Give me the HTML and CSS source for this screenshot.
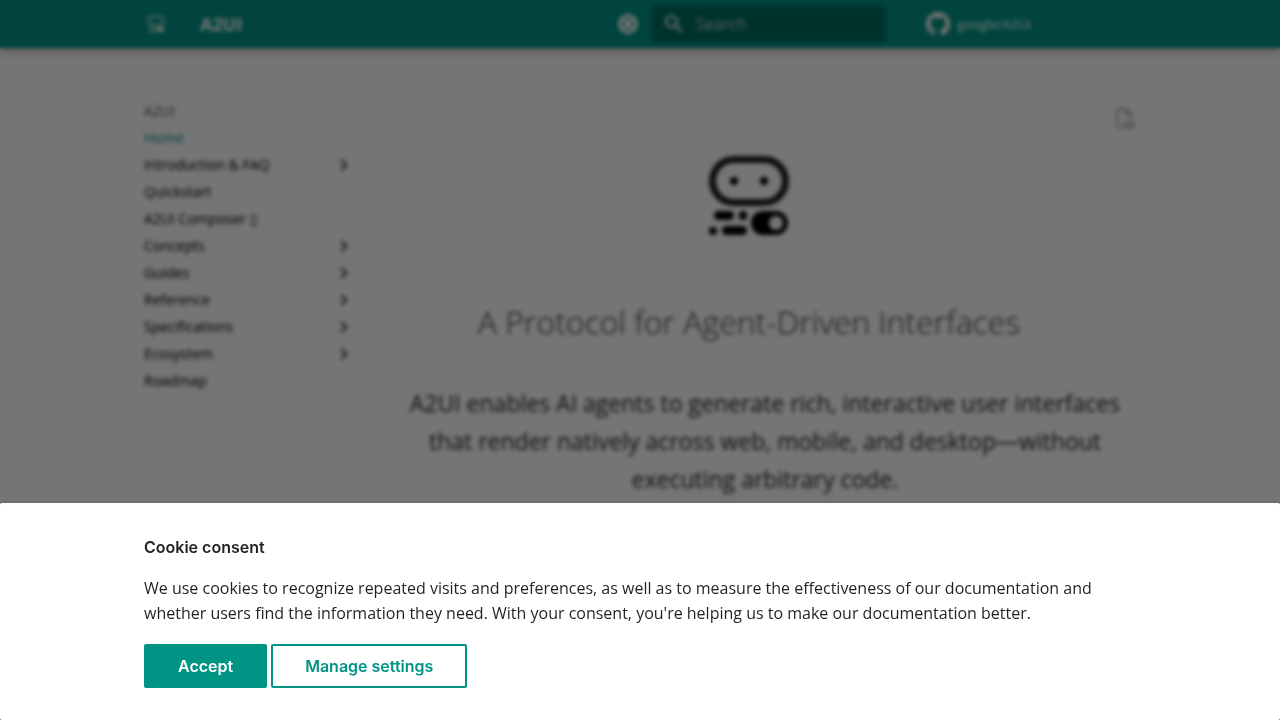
FILE: index.html
```
<!DOCTYPE html>
<html lang="en">
<head>
    <meta charset="UTF-8">
    <meta name="viewport" content="width=device-width, initial-scale=1.0">
    <title>A2UI</title>
    <link rel="stylesheet" href="styles.css">
</head>
<body>

<header class="header">
    <div class="header-inner">
        <a class="logo" href="#" aria-label="A2UI">
            <svg viewBox="0 0 24 24" width="24" height="24" fill="none" stroke="currentColor" stroke-width="1.500">
                <rect x="4.500" y="4" width="15" height="9.500" rx="4.750"/>
                <path d="M6 16.500h3M11.500 16.500h.5M5 19.500h.5M8 19.500h4" stroke-linecap="round"/>
                <rect x="13" y="15" width="7" height="5" rx="2.500" fill="currentColor" stroke="none"/>
            </svg>
        </a>
        <span class="site-name">A2UI</span>
        <button class="icon-button" type="button" aria-label="Switch to dark mode">
            <svg viewBox="0 0 24 24" width="24" height="24" fill="currentColor"><path d="M12 8a4 4 0 0 0-4 4 4 4 0 0 0 4 4 4 4 0 0 0 4-4 4 4 0 0 0-4-4m0 10a6 6 0 0 1-6-6 6 6 0 0 1 6-6 6 6 0 0 1 6 6 6 6 0 0 1-6 6m8-9.310V4h-4.690L12 .690 8.690 4H4v4.690L.690 12 4 15.310V20h4.690L12 23.310 15.310 20H20v-4.690L23.310 12z"/></svg>
        </button>
        <label class="search">
            <svg viewBox="0 0 24 24" width="24" height="24" fill="currentColor"><path d="M9.500 3A6.500 6.500 0 0 1 16 9.500c0 1.610-.590 3.090-1.560 4.230l.270.270h.790l5 5-1.500 1.500-5-5v-.790l-.270-.270A6.516 6.516 0 0 1 9.500 16 6.500 6.500 0 0 1 3 9.500 6.500 6.500 0 0 1 9.500 3m0 2C7 5 5 7 5 9.500S7 14 9.500 14 14 12 14 9.500 12 5 9.500 5"/></svg>
            <input type="text" placeholder="Search" aria-label="Search">
        </label>
        <a class="source" href="#">
            <svg viewBox="0 0 16 16" width="24" height="24" fill="currentColor"><path d="M8 0C3.580 0 0 3.580 0 8c0 3.540 2.290 6.530 5.470 7.590.4.070.550-.170.550-.380 0-.190-.010-.820-.010-1.490-2.010.370-2.530-.490-2.690-.940-.090-.230-.480-.940-.820-1.130-.280-.150-.680-.520-.010-.530.630-.010 1.080.580 1.230.820.720 1.210 1.870.870 2.330.660.070-.520.280-.870.510-1.070-1.780-.2-3.640-.890-3.640-3.950 0-.870.310-1.590.820-2.150-.080-.2-.360-1.020.080-2.120 0 0 .670-.210 2.200.820a7.600 7.600 0 0 1 4 0c1.530-1.040 2.200-.820 2.200-.820.440 1.100.160 1.920.080 2.120.510.560.820 1.270.820 2.150 0 3.070-1.870 3.750-3.650 3.950.290.250.540.730.540 1.480 0 1.070-.010 1.930-.010 2.200 0 .210.150.460.550.380A8.010 8.010 0 0 0 16 8c0-4.420-3.580-8-8-8"/></svg>
            <span>google/A2UI</span>
        </a>
    </div>
</header>

<div class="container">
    <nav class="sidebar" aria-label="Navigation">
        <span class="nav-title">A2UI</span>
        <a class="nav-link active" href="#">Home</a>
        <a class="nav-link section" href="#">Introduction &amp; FAQ</a>
        <a class="nav-link" href="#">Quickstart</a>
        <a class="nav-link" href="#">A2UI Composer ▯</a>
        <a class="nav-link section" href="#">Concepts</a>
        <a class="nav-link section" href="#">Guides</a>
        <a class="nav-link section" href="#">Reference</a>
        <a class="nav-link section" href="#">Specifications</a>
        <a class="nav-link section" href="#">Ecosystem</a>
        <a class="nav-link" href="#">Roadmap</a>
    </nav>

    <main class="content">
        <div class="hero">
            <div class="hero-main">
                <svg class="hero-logo" viewBox="0 0 80 80" width="80" height="80">
                    <rect x="3.500" y="3.500" width="73" height="43" rx="21.500" fill="none" stroke="currentColor" stroke-width="7"/>
                    <circle cx="25" cy="25" r="4"/>
                    <circle cx="55" cy="25" r="4"/>
                    <rect x="5" y="55" width="20" height="9" rx="4.500"/>
                    <rect x="30" y="55" width="8" height="9" rx="4"/>
                    <circle cx="4" cy="75" r="4"/>
                    <rect x="13" y="70" width="25" height="9" rx="4.500"/>
                    <path fill-rule="evenodd" d="M54 55h13a12 12 0 0 1 0 24H54a12 12 0 0 1 0-24m13 5a7 7 0 1 0 0 14 7 7 0 0 0 0-14"/>
                </svg>
                <h1>A Protocol for Agent-Driven Interfaces</h1>
            </div>
            <a class="view-source" href="#" aria-label="View source of this page">
                <svg viewBox="0 0 24 24" width="24" height="24" fill="currentColor"><path d="M17 18c.560 0 1 .440 1 1s-.440 1-1 1-1-.440-1-1 .440-1 1-1m0-3c-2.730 0-5.060 1.660-6 4 .940 2.340 3.270 4 6 4s5.060-1.660 6-4c-.940-2.340-3.270-4-6-4m0 6.500a2.500 2.500 0 0 1-2.500-2.500 2.500 2.500 0 0 1 2.500-2.500 2.500 2.500 0 0 1 2.500 2.500 2.500 2.500 0 0 1-2.500 2.500M9.270 20H6V4h7v5h5v4.070c.7.080 1.360.250 2 .490V8l-6-6H6a2 2 0 0 0-2 2v16a2 2 0 0 0 2 2h4.500a8.200 8.200 0 0 1-1.230-2"/></svg>
            </a>
        </div>
        <p class="tagline">A2UI enables AI agents to generate rich, interactive user interfaces that render natively across web, mobile, and desktop—without executing arbitrary code.</p>
    </main>
</div>

<!-- Cookie consent dialog -->
<div class="overlay"></div>
<aside class="consent" role="dialog" aria-labelledby="consentTitle">
    <form class="consent-inner">
        <h4 id="consentTitle">Cookie consent</h4>
        <p>We use cookies to recognize repeated visits and preferences, as well as to measure the effectiveness of our documentation and whether users find the information they need. With your consent, you're helping us to make our documentation better.</p>
        <div class="consent-actions">
            <button class="button primary" type="button">Accept</button>
            <button class="button" type="button">Manage settings</button>
        </div>
    </form>
</aside>

</body>
</html>
```

FILE: styles.css
```
* {
    box-sizing: border-box;
}

body {
    font-family: 'Open Sans', sans-serif;
    font-size: 16px;
    color: rgba(0, 0, 0, 0.87);
    background-color: #fff;
    margin: 0;
    overflow: hidden;
}

a {
    color: inherit;
    text-decoration: none;
}

svg {
    display: block;
    flex-shrink: 0;
}

.header {
    background-color: #009485;
    color: #fff;
    box-shadow: 0 0 4px rgba(0, 0, 0, 0.1), 0 4px 8px rgba(0, 0, 0, 0.2);
}

.header-inner {
    display: flex;
    align-items: center;
    height: 48px;
    max-width: 992px;
    margin: 0 auto;
}

.site-name {
    flex: 1;
    margin-left: 32px;
    font-size: 18px;
    font-weight: 700;
}

.icon-button {
    margin: 0 12px;
    padding: 0;
    border: none;
    background: none;
    color: inherit;
    cursor: pointer;
}

.search {
    display: flex;
    align-items: center;
    gap: 10px;
    width: 234px;
    height: 36px;
    padding: 0 10px;
    border-radius: 2px;
    background-color: rgba(0, 0, 0, 0.26);
}

.search input {
    width: 100%;
    min-width: 0;
    padding: 0;
    border: none;
    outline: none;
    background: none;
    color: inherit;
    font-family: inherit;
    font-size: 16px;
}

.search input::placeholder {
    color: rgba(255, 255, 255, 0.7);
}

.source {
    display: flex;
    align-items: center;
    gap: 7px;
    width: 210px;
    margin-left: 40px;
    font-size: 13px;
}

.container {
    display: flex;
    gap: 38px;
    max-width: 992px;
    margin: 0 auto;
    padding-top: 49px;
}

.sidebar {
    display: flex;
    flex-direction: column;
    width: 212px;
    font-size: 14px;
    line-height: 27px;
}

.nav-title {
    color: rgba(0, 0, 0, 0.7);
    font-weight: 500;
}

.nav-link {
    display: flex;
    align-items: center;
    justify-content: space-between;
    color: #000;
}

.nav-link.active {
    color: #009485;
}

.nav-link.section::after {
    content: "";
    width: 6px;
    height: 6px;
    margin-right: 10px;
    border-top: 2px solid rgba(0, 0, 0, 0.8);
    border-right: 2px solid rgba(0, 0, 0, 0.8);
    transform: rotate(45deg);
}

.content {
    flex: 1;
}

.hero {
    display: flex;
    gap: 8px;
    padding-top: 9px;
}

.hero-main {
    flex: 1;
    padding-top: 50px;
}

.hero-logo {
    margin: 0 auto;
}

h1 {
    margin: 65px 0 41px;
    font-size: 32px;
    font-weight: 300;
    line-height: 42px;
    text-align: center;
    color: rgba(0, 0, 0, 0.8);
}

.view-source {
    color: rgba(0, 0, 0, 0.32);
}

.tagline {
    margin: 0;
    font-size: 23px;
    line-height: 38px;
    text-align: center;
}

.overlay {
    position: fixed;
    inset: 0;
    background-color: rgba(0, 0, 0, 0.54);
    backdrop-filter: blur(2px);
}

.consent {
    position: fixed;
    right: 0;
    bottom: 0;
    left: 0;
    padding: 32px 24px;
    border-radius: 2px;
    background-color: #fff;
    box-shadow: 0 0 4px rgba(0, 0, 0, 0.1), 0 4px 8px rgba(0, 0, 0, 0.2);
    line-height: 25px;
}

.consent-inner {
    max-width: 992px;
    margin: 0 auto;
}

.consent h4 {
    margin: 0 0 16px;
    font-family: 'Inter', sans-serif;
    font-size: 16px;
    font-weight: 600;
}

.consent p {
    margin: 0 0 18px;
}

.consent-actions {
    display: flex;
    gap: 4px;
}

.button {
    padding: 10px 32px;
    border: 2px solid #009485;
    border-radius: 2px;
    background-color: #fff;
    color: #009485;
    font-family: 'Inter', sans-serif;
    font-size: 16px;
    font-weight: 600;
    line-height: 20px;
    cursor: pointer;
}

.button.primary {
    background-color: #009485;
    color: #fff;
}
```
